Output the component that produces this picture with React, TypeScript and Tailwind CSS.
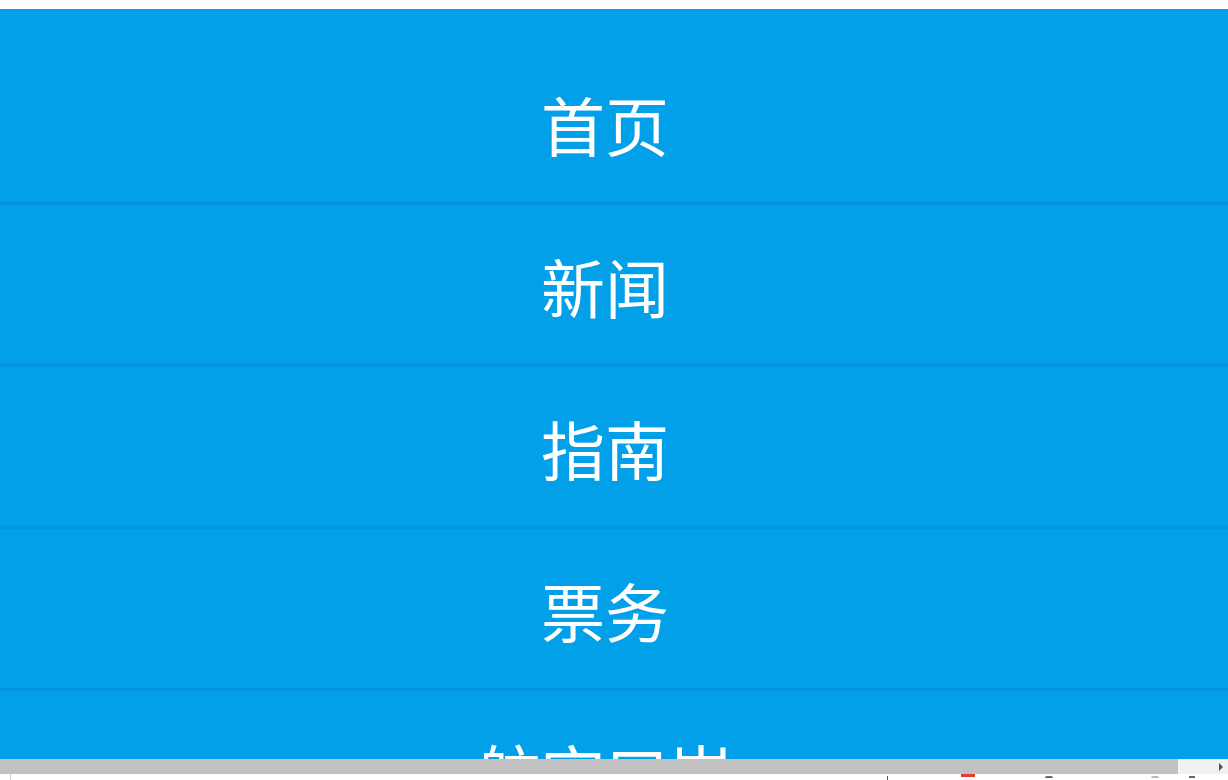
import React from "react";

const items = ["首页", "新闻", "指南", "票务", "航空口岸"];

export default function App() {
  return (
    <div className="w-[1228px] h-[780px] overflow-hidden flex flex-col bg-white" style={{ fontFamily: '"Noto Sans CJK SC", "Noto Sans", sans-serif' }}>
      <div className="h-[9px] shrink-0 bg-white" />
      <div className="flex-1 overflow-hidden bg-[#02a0e8]">
        <div className="h-[34px]" />
        {items.map((t) => (
          <div
            key={t}
            className="h-[162px] border-b-[3px] border-[#0196dc] flex items-center justify-center pr-[18px] text-white text-[64px] leading-none"
          >
            {t}
          </div>
        ))}
      </div>
      <div className="h-[15px] shrink-0 flex bg-[#f1f1f1]">
        <div className="w-[1178px] h-full bg-[#c1c1c1]" />
        <div className="flex-1" />
        <div className="w-[15px] h-full flex items-center justify-center">
          <div className="w-0 h-0 border-y-[4px] border-y-transparent border-l-[4px] border-l-[#505050]" />
        </div>
      </div>
      <div className="h-[6px] shrink-0 bg-white relative flex">
        <div className="ml-[10px] w-px h-full bg-[#d0d0d0]" />
        <div className="ml-[876px] mt-[2px] w-px h-[4px] bg-[#555]" />
        <div className="ml-[73px] w-[14px] h-[3px] bg-[#e53935]" />
        <div className="ml-[70px] mt-[2px] w-[8px] h-[2px] rounded-t-full bg-[#666]" />
        <div className="ml-[98px] mt-[2px] w-[8px] h-[2px] rounded-t-full bg-[#bbb]" />
        <div className="ml-[30px] mt-[2px] w-[6px] h-[2px] bg-[#666]" />
      </div>
    </div>
  );
}
